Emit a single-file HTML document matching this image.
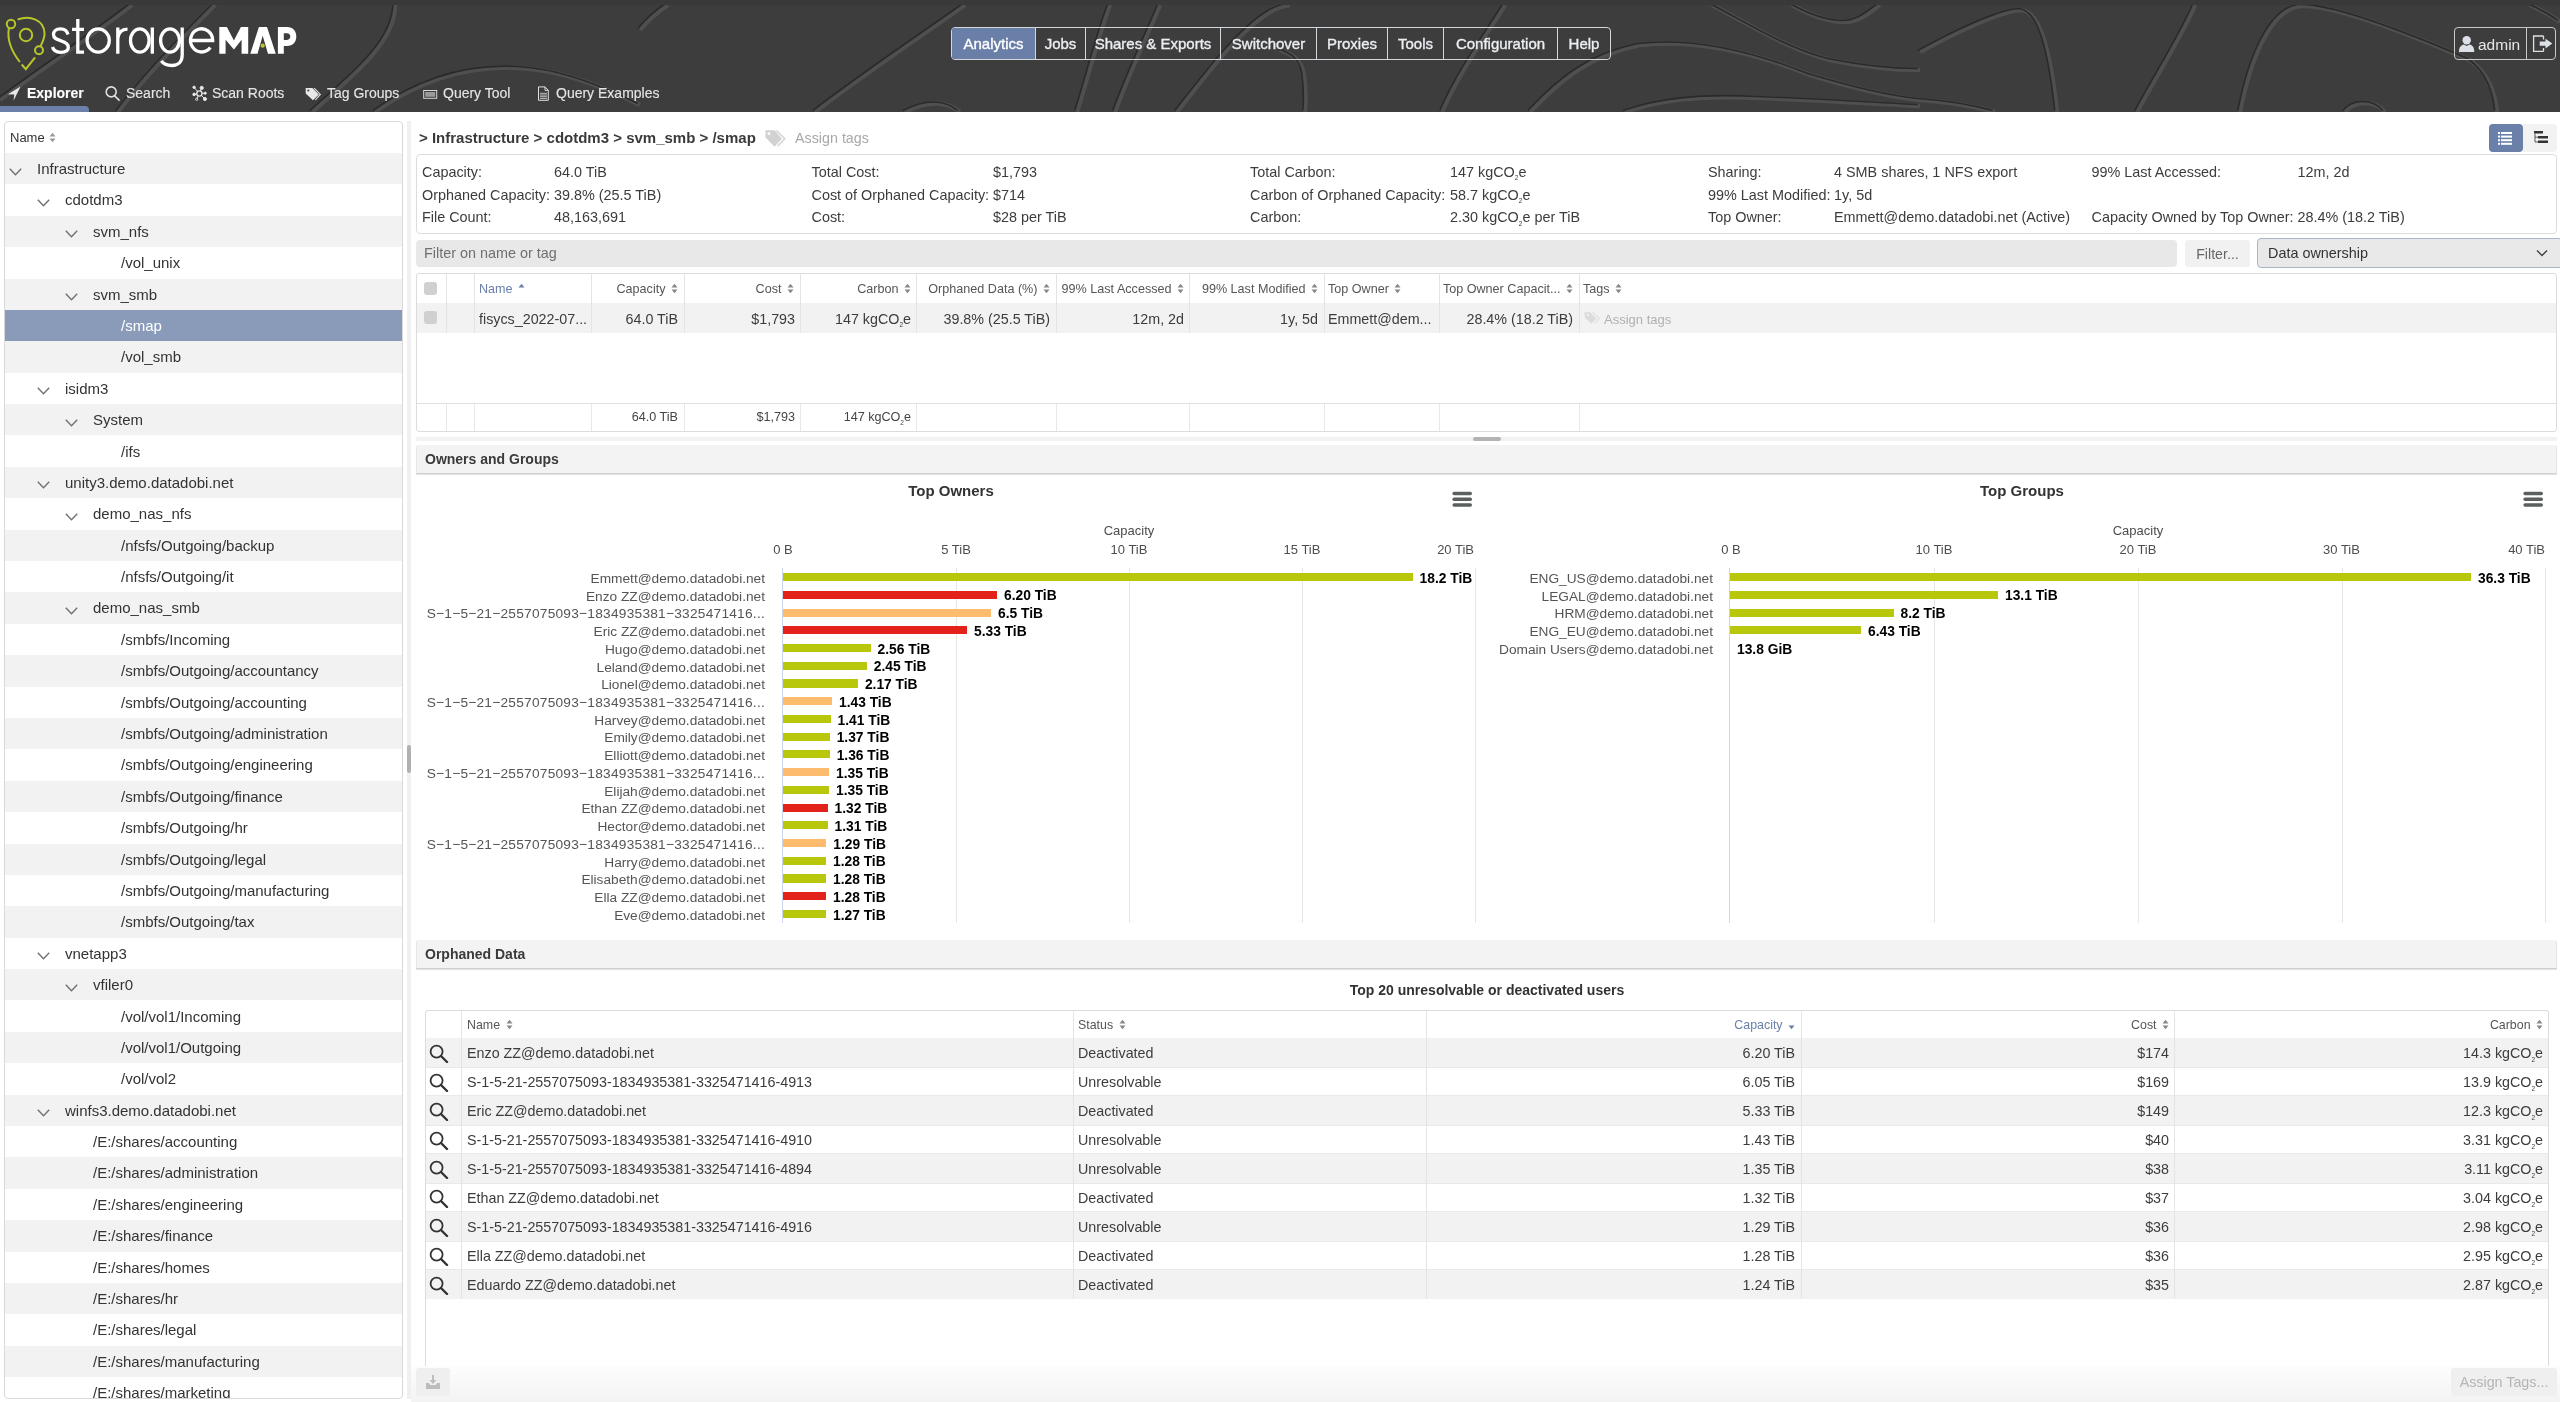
<!DOCTYPE html>
<html><head><meta charset="utf-8">
<style>
*{box-sizing:border-box;margin:0;padding:0}
html,body{width:2560px;height:1402px;overflow:hidden;background:#fff;font-family:"Liberation Sans",sans-serif;color:#333}
.a{position:absolute;white-space:nowrap}
#hdr{position:absolute;left:0;top:0;width:2560px;height:112px;background:#3d3d3d;overflow:hidden}
.topnav{position:absolute;left:951px;top:27px;height:33px;border:1px solid #d2d6dd;border-radius:4px;display:flex;overflow:hidden}
.topnav div{height:31px;line-height:31px;font-size:15px;color:#eceef2;border-left:1px solid #d2d6dd;text-align:center;-webkit-text-stroke:0.35px currentColor}
.topnav div:first-child{border-left:none;background:#6a7fa7;color:#fff}
.subnav{position:absolute;top:84px;font-size:14px;color:#e6e6e6;height:18px;line-height:18px;-webkit-text-stroke:0.12px currentColor}
/* tree */
#tree{position:absolute;left:4px;top:121px;width:399px;height:1278px;border:1px solid #d9d9d9;border-radius:4px;overflow:hidden;background:#fff}
#tree .th{position:absolute;left:0;top:0;width:100%;height:31px;font-size:13px;line-height:31px;padding-left:5px;color:#333}
.tr{position:absolute;left:0;width:397px;height:31.36px;font-size:15px;line-height:31px;color:#333}
.tr.g{background:#f2f2f2}
.tr.sel{background:#8a9bb9;color:#fff}
.tr svg{position:absolute;top:11px}
</style></head><body><div id="root" style="position:absolute;left:0;top:0;width:2560px;height:1402px;will-change:transform">
<div id="hdr">
  <svg width="2560" height="112" style="position:absolute;left:0;top:0" fill="none">
    <rect x="0" y="0" width="2560" height="5" fill="#393939"/>
    <g stroke="#4f4f4f" stroke-width="4.5"><path d="M 0 100 C 40 70, 100 30, 132 5 M 118 112 C 150 70, 190 30, 215 5 M 312 112 C 360 70, 395 40, 395 5 M 375 112 C 420 80, 470 65, 520 68 C 560 70, 600 85, 640 105 M 640 30 C 650 18, 660 10, 668 5 M 815 112 C 870 70, 930 30, 965 5 M 905 112 C 925 102, 945 100, 960 112 M 1077 112 C 1090 70, 1100 30, 1110 5 M 1115 112 C 1130 70, 1150 30, 1160 5 M 1177 112 C 1210 70, 1240 30, 1270 12 C 1275 9, 1282 6, 1290 5 M 1442 112 C 1460 70, 1490 30, 1505 5 M 1530 112 C 1560 80, 1590 55, 1640 45 C 1700 38, 1760 55, 1810 75 C 1860 90, 1900 98, 1920 100 C 1950 102, 1980 108, 1995 112 M 1625 112 C 1660 100, 1700 95, 1760 98 C 1820 100, 1880 104, 1920 106 M 1712 5 C 1750 25, 1790 50, 1830 60 C 1870 68, 1900 70, 1920 70 M 1792 5 C 1810 15, 1830 22, 1845 22 C 1860 22, 1870 12, 1880 5 M 1280 50 C 1295 55, 1302 62, 1304 75 C 1306 90, 1306 100, 1305 112 M 1920 52 C 1960 30, 2000 12, 2020 10 C 2040 10, 2050 50, 2057 112 M 2137 112 C 2160 70, 2185 30, 2195 5 M 2240 112 C 2250 60, 2270 10, 2300 6 C 2330 4, 2400 30, 2470 60 C 2490 75, 2495 95, 2497 112 M 2345 112 C 2355 100, 2375 100, 2385 112 M 2530 5 C 2545 12, 2555 18, 2560 22"/></g>
    <g stroke="#2a2a2a" stroke-width="1.6" transform="translate(-2.2,-1.5)"><path d="M 0 100 C 40 70, 100 30, 132 5 M 118 112 C 150 70, 190 30, 215 5 M 312 112 C 360 70, 395 40, 395 5 M 375 112 C 420 80, 470 65, 520 68 C 560 70, 600 85, 640 105 M 640 30 C 650 18, 660 10, 668 5 M 815 112 C 870 70, 930 30, 965 5 M 905 112 C 925 102, 945 100, 960 112 M 1077 112 C 1090 70, 1100 30, 1110 5 M 1115 112 C 1130 70, 1150 30, 1160 5 M 1177 112 C 1210 70, 1240 30, 1270 12 C 1275 9, 1282 6, 1290 5 M 1442 112 C 1460 70, 1490 30, 1505 5 M 1530 112 C 1560 80, 1590 55, 1640 45 C 1700 38, 1760 55, 1810 75 C 1860 90, 1900 98, 1920 100 C 1950 102, 1980 108, 1995 112 M 1625 112 C 1660 100, 1700 95, 1760 98 C 1820 100, 1880 104, 1920 106 M 1712 5 C 1750 25, 1790 50, 1830 60 C 1870 68, 1900 70, 1920 70 M 1792 5 C 1810 15, 1830 22, 1845 22 C 1860 22, 1870 12, 1880 5 M 1280 50 C 1295 55, 1302 62, 1304 75 C 1306 90, 1306 100, 1305 112 M 1920 52 C 1960 30, 2000 12, 2020 10 C 2040 10, 2050 50, 2057 112 M 2137 112 C 2160 70, 2185 30, 2195 5 M 2240 112 C 2250 60, 2270 10, 2300 6 C 2330 4, 2400 30, 2470 60 C 2490 75, 2495 95, 2497 112 M 2345 112 C 2355 100, 2375 100, 2385 112 M 2530 5 C 2545 12, 2555 18, 2560 22"/></g>
    <rect x="0" y="0" width="2560" height="5" fill="#393939"/>
  </svg>
  <!-- logo -->
  <svg class="a" style="left:0;top:10px" width="50" height="70" viewBox="0 10 50 70" fill="none" stroke="#b9c62a" stroke-width="2">
    <circle cx="11" cy="24" r="4.2"/>
    <circle cx="26" cy="35" r="6.2"/>
    <circle cx="39" cy="50.3" r="4"/>
    <path d="M17.6 19.5 C30 15 44 20 44.5 33 C45 38 42 43 40.5 46.3"/>
    <path d="M8.8 28.5 C7 40 12 52 19.9 62"/>
    <path d="M21.7 64.5 L25.8 69.2 L35.1 57.4"/>
  </svg>
  <svg class="a" style="left:0;top:0" width="300" height="75" viewBox="0 0 300 75" fill="none" stroke="#fff" stroke-width="3.3">
    <path d="M68 34.5 C67 30.5, 64 28.8, 60.5 28.8 C56 28.8, 53.5 31.5, 53.5 34.5 C53.5 38.5, 57 39.5, 61 40.8 C65 42, 68.3 43.5, 68.3 47.2 C68.3 50.8, 65 52.3, 60.5 52.3 C56.5 52.3, 53.5 50.5, 52.5 47"/>
    <path d="M77.8 19 V52.2 H84 M72 29.3 H84"/>
    <ellipse cx="98.2" cy="40.5" rx="11.1" ry="11.6"/>
    <path d="M117.8 53.7 V27.5 M117.8 38.5 C118.5 32, 122 29.2, 127.5 29.2"/>
    <ellipse cx="139.8" cy="40.5" rx="9.3" ry="11.7"/>
    <path d="M152.3 27.5 V53.7"/>
    <ellipse cx="170" cy="40.5" rx="9.4" ry="11.7"/>
    <path d="M182.2 27.5 V55 C182.2 62, 178 65.5, 172 65.5 C167 65.5, 163 63.5, 161.4 60.9"/>
    <path d="M190.5 40.5 H212.7 A11.1 11.6 0 1 0 210.3 47.6"/>
    <g stroke="none" fill="#fff">
      <path d="M219.3 53.8 L219.3 27 L226.9 27 L233.9 40.4 L240.9 27 L248.2 27 L248.2 53.8 L241.6 53.8 L241.6 39.7 L233.9 49.5 L225.6 39.7 L225.6 53.8 Z"/>
      <path d="M250.3 53.8 L258.9 27 L267 27 L275.8 53.8 L268 53.8 L262.7 35.8 L257.5 53.8 Z"/>
      <path fill-rule="evenodd" d="M277.9 53.8 V27 H287 C293 27 296.3 31 296.3 36.5 C296.3 42 293 46 287 46 H283.8 V53.8 Z M283.8 33.3 H287 C289.2 33.3 290.3 34.8 290.3 36.6 C290.3 38.5 289.2 39.9 287 39.9 H283.8 Z"/>
    </g>
    <circle cx="262.7" cy="45.7" r="2.1" fill="#b9c62a" stroke="none"/>
  </svg>
  <!-- sub nav -->
  <div style="position:absolute;left:0;top:106px;width:89px;height:6px;background:#6a80a8;border-radius:0 4px 0 0"></div>
  <svg class="a" style="left:0;top:80px" width="25" height="25" viewBox="0 80 25 25"><path d="M20.6 86.6 L8 94.2 L14.3 94.6 L13.5 100.8 Z" fill="#e8e8e8"/></svg>
  <div class="subnav" style="left:27px;font-weight:700;color:#fff;font-size:14px">Explorer</div>
  <svg class="a" style="left:100px;top:80px" width="25" height="25" viewBox="100 80 25 25" fill="none" stroke="#e0e0e0" stroke-width="1.6"><circle cx="111.2" cy="91.9" r="5"/><path d="M114.6 95.9 L119.6 100.6"/></svg>
  <div class="subnav" style="left:126px">Search</div>
  <svg class="a" style="left:185px;top:80px" width="25" height="25" viewBox="185 80 25 25" fill="#e6e6e6" stroke="#e6e6e6" stroke-width="1"><path d="M199.4 93.5 L194.1 87.3 M199.4 93.5 L201.7 87.9 M199.4 93.5 L205.2 93.2 M199.4 93.5 L194.1 94.4 M199.4 93.5 L196.7 99.3 M199.4 93.5 L204.9 99"/><circle cx="199.4" cy="93.5" r="2.6" fill="#3d3d3d" stroke-width="1.4"/><circle cx="194.1" cy="87.3" r="1.2"/><circle cx="201.7" cy="87.9" r="1.6"/><circle cx="205.2" cy="93.2" r="1.1"/><circle cx="194.1" cy="94.4" r="1.3"/><circle cx="196.7" cy="99.3" r="1.1" fill="#3d3d3d"/><circle cx="204.9" cy="99" r="1.6"/></svg>
  <div class="subnav" style="left:212px">Scan Roots</div>
  <svg class="a" style="left:300px;top:80px" width="25" height="25" viewBox="300 80 25 25"><path d="M305.7 88 L312.5 88 L318.8 94.4 L313 100.2 L305.7 93.6 Z" fill="#e8e8e8"/><circle cx="308.3" cy="90.5" r="1" fill="#3d3d3d"/><path d="M314.2 88.2 L320.3 94.4 L315.3 100" fill="none" stroke="#e8e8e8" stroke-width="1.1"/></svg>
  <div class="subnav" style="left:327px">Tag Groups</div>
  <svg class="a" style="left:420px;top:85px" width="20" height="18" viewBox="420 85 20 18"><rect x="423.7" y="90.5" width="13" height="7.8" fill="none" stroke="#d8d8d8" stroke-width="1"/><rect x="425.2" y="92" width="10" height="4.8" fill="#9a9a9a"/></svg>
  <div class="subnav" style="left:443px">Query Tool</div>
  <svg class="a" style="left:535px;top:84px" width="16" height="19" viewBox="535 84 16 19" fill="none" stroke="#e0e0e0" stroke-width="1"><path d="M538.5 86.9 H545 L548.3 90.3 V100.3 H538.5 Z M545 86.9 V90.3 H548.3"/><path d="M540 93.3 H547 M540 95 H547 M540 96.7 H547 M540 98.4 H547" stroke="#bdbdbd"/></svg>
  <div class="subnav" style="left:556px">Query Examples</div>
  <!-- top nav -->
  <div class="topnav">
    <div style="width:83px">Analytics</div>
    <div style="width:50px">Jobs</div>
    <div style="width:135px">Shares &amp; Exports</div>
    <div style="width:96px">Switchover</div>
    <div style="width:71px">Proxies</div>
    <div style="width:56px">Tools</div>
    <div style="width:114px">Configuration</div>
    <div style="width:53px">Help</div>
  </div>
  <div class="a" style="left:2454px;top:27px;width:102px;height:33px;border:1px solid #c8c8c8;border-radius:4px"></div>
  <div class="a" style="left:2526px;top:27px;width:1px;height:33px;background:#c8c8c8"></div>
  <svg class="a" style="left:2455px;top:32px" width="22" height="24" viewBox="2455 32 22 24" fill="#dde0e6"><circle cx="2466.7" cy="40.3" r="4.2"/><path d="M2459 52 C2459 46.5, 2461.5 45, 2464 44.5 L2466.7 46 L2469.4 44.5 C2472 45, 2474.3 46.5, 2474.3 52 Z"/></svg>
  <div class="a" style="left:2478px;top:36px;font-size:15.5px;line-height:18px;color:#e6e6e6">admin</div>
  <svg class="a" style="left:2528px;top:32px" width="28" height="24" viewBox="2528 32 28 24" fill="none" stroke="#dde0e6" stroke-width="1.3"><path d="M2543.5 36 H2533.6 V51.4 H2543.5 M2543.5 48 V51.4 M2543.5 36 V39.5"/><path d="M2539.7 41.5 H2545.5 V38.8 L2552.3 43.6 L2545.5 48.5 V45.8 H2539.7 Z" fill="#dde0e6" stroke="none"/></svg>
</div>

<!-- left tree -->
<div id="tree">
  <div class="th">Name <svg width="7" height="11" viewBox="0 0 7 11" style="vertical-align:-1px;margin-left:1px"><path d="M0.5 4.5 L3.5 0.8 L6.5 4.5Z M0.5 6.5 L3.5 10.2 L6.5 6.5Z" fill="#999"/></svg></div>
  <div class="tr g" style="top:31.00px"><svg style="left:3.5px;top:14.5px" width="13" height="8" viewBox="0 0 13 8" fill="none" stroke="#707070" stroke-width="1.4"><path d="M0.8 0.8 L6.5 6.8 L12.2 0.8"/></svg><span class="a" style="left:32px">Infrastructure</span></div>
<div class="tr" style="top:62.39px"><svg style="left:31.5px;top:14.5px" width="13" height="8" viewBox="0 0 13 8" fill="none" stroke="#707070" stroke-width="1.4"><path d="M0.8 0.8 L6.5 6.8 L12.2 0.8"/></svg><span class="a" style="left:60px">cdotdm3</span></div>
<div class="tr g" style="top:93.78px"><svg style="left:59.5px;top:14.5px" width="13" height="8" viewBox="0 0 13 8" fill="none" stroke="#707070" stroke-width="1.4"><path d="M0.8 0.8 L6.5 6.8 L12.2 0.8"/></svg><span class="a" style="left:88px">svm_nfs</span></div>
<div class="tr" style="top:125.17px"><span class="a" style="left:116px">/vol_unix</span></div>
<div class="tr g" style="top:156.56px"><svg style="left:59.5px;top:14.5px" width="13" height="8" viewBox="0 0 13 8" fill="none" stroke="#707070" stroke-width="1.4"><path d="M0.8 0.8 L6.5 6.8 L12.2 0.8"/></svg><span class="a" style="left:88px">svm_smb</span></div>
<div class="tr sel" style="top:187.95px"><span class="a" style="left:116px">/smap</span></div>
<div class="tr g" style="top:219.34px"><span class="a" style="left:116px">/vol_smb</span></div>
<div class="tr" style="top:250.73px"><svg style="left:31.5px;top:14.5px" width="13" height="8" viewBox="0 0 13 8" fill="none" stroke="#707070" stroke-width="1.4"><path d="M0.8 0.8 L6.5 6.8 L12.2 0.8"/></svg><span class="a" style="left:60px">isidm3</span></div>
<div class="tr g" style="top:282.12px"><svg style="left:59.5px;top:14.5px" width="13" height="8" viewBox="0 0 13 8" fill="none" stroke="#707070" stroke-width="1.4"><path d="M0.8 0.8 L6.5 6.8 L12.2 0.8"/></svg><span class="a" style="left:88px">System</span></div>
<div class="tr" style="top:313.51px"><span class="a" style="left:116px">/ifs</span></div>
<div class="tr g" style="top:344.90px"><svg style="left:31.5px;top:14.5px" width="13" height="8" viewBox="0 0 13 8" fill="none" stroke="#707070" stroke-width="1.4"><path d="M0.8 0.8 L6.5 6.8 L12.2 0.8"/></svg><span class="a" style="left:60px">unity3.demo.datadobi.net</span></div>
<div class="tr" style="top:376.29px"><svg style="left:59.5px;top:14.5px" width="13" height="8" viewBox="0 0 13 8" fill="none" stroke="#707070" stroke-width="1.4"><path d="M0.8 0.8 L6.5 6.8 L12.2 0.8"/></svg><span class="a" style="left:88px">demo_nas_nfs</span></div>
<div class="tr g" style="top:407.68px"><span class="a" style="left:116px">/nfsfs/Outgoing/backup</span></div>
<div class="tr" style="top:439.07px"><span class="a" style="left:116px">/nfsfs/Outgoing/it</span></div>
<div class="tr g" style="top:470.46px"><svg style="left:59.5px;top:14.5px" width="13" height="8" viewBox="0 0 13 8" fill="none" stroke="#707070" stroke-width="1.4"><path d="M0.8 0.8 L6.5 6.8 L12.2 0.8"/></svg><span class="a" style="left:88px">demo_nas_smb</span></div>
<div class="tr" style="top:501.85px"><span class="a" style="left:116px">/smbfs/Incoming</span></div>
<div class="tr g" style="top:533.24px"><span class="a" style="left:116px">/smbfs/Outgoing/accountancy</span></div>
<div class="tr" style="top:564.63px"><span class="a" style="left:116px">/smbfs/Outgoing/accounting</span></div>
<div class="tr g" style="top:596.02px"><span class="a" style="left:116px">/smbfs/Outgoing/administration</span></div>
<div class="tr" style="top:627.41px"><span class="a" style="left:116px">/smbfs/Outgoing/engineering</span></div>
<div class="tr g" style="top:658.80px"><span class="a" style="left:116px">/smbfs/Outgoing/finance</span></div>
<div class="tr" style="top:690.19px"><span class="a" style="left:116px">/smbfs/Outgoing/hr</span></div>
<div class="tr g" style="top:721.58px"><span class="a" style="left:116px">/smbfs/Outgoing/legal</span></div>
<div class="tr" style="top:752.97px"><span class="a" style="left:116px">/smbfs/Outgoing/manufacturing</span></div>
<div class="tr g" style="top:784.36px"><span class="a" style="left:116px">/smbfs/Outgoing/tax</span></div>
<div class="tr" style="top:815.75px"><svg style="left:31.5px;top:14.5px" width="13" height="8" viewBox="0 0 13 8" fill="none" stroke="#707070" stroke-width="1.4"><path d="M0.8 0.8 L6.5 6.8 L12.2 0.8"/></svg><span class="a" style="left:60px">vnetapp3</span></div>
<div class="tr g" style="top:847.14px"><svg style="left:59.5px;top:14.5px" width="13" height="8" viewBox="0 0 13 8" fill="none" stroke="#707070" stroke-width="1.4"><path d="M0.8 0.8 L6.5 6.8 L12.2 0.8"/></svg><span class="a" style="left:88px">vfiler0</span></div>
<div class="tr" style="top:878.53px"><span class="a" style="left:116px">/vol/vol1/Incoming</span></div>
<div class="tr g" style="top:909.92px"><span class="a" style="left:116px">/vol/vol1/Outgoing</span></div>
<div class="tr" style="top:941.31px"><span class="a" style="left:116px">/vol/vol2</span></div>
<div class="tr g" style="top:972.70px"><svg style="left:31.5px;top:14.5px" width="13" height="8" viewBox="0 0 13 8" fill="none" stroke="#707070" stroke-width="1.4"><path d="M0.8 0.8 L6.5 6.8 L12.2 0.8"/></svg><span class="a" style="left:60px">winfs3.demo.datadobi.net</span></div>
<div class="tr" style="top:1004.09px"><span class="a" style="left:88px">/E:/shares/accounting</span></div>
<div class="tr g" style="top:1035.48px"><span class="a" style="left:88px">/E:/shares/administration</span></div>
<div class="tr" style="top:1066.87px"><span class="a" style="left:88px">/E:/shares/engineering</span></div>
<div class="tr g" style="top:1098.26px"><span class="a" style="left:88px">/E:/shares/finance</span></div>
<div class="tr" style="top:1129.65px"><span class="a" style="left:88px">/E:/shares/homes</span></div>
<div class="tr g" style="top:1161.04px"><span class="a" style="left:88px">/E:/shares/hr</span></div>
<div class="tr" style="top:1192.43px"><span class="a" style="left:88px">/E:/shares/legal</span></div>
<div class="tr g" style="top:1223.82px"><span class="a" style="left:88px">/E:/shares/manufacturing</span></div>
<div class="tr" style="top:1255.21px"><span class="a" style="left:88px">/E:/shares/marketing</span></div>
</div>

<div class="a" style="left:407px;top:121px;width:4px;height:1278px;background:#f0f0f0"></div>
<div class="a" style="left:407px;top:745px;width:4px;height:28px;background:#b0b0b0;border-radius:2px"></div>
<div class="a" style="left:419.0px;top:130.3px;font-size:15px;line-height:15px;color:#3a3a3a;font-weight:700;">&gt; Infrastructure &gt; cdotdm3 &gt; svm_smb &gt; /smap</div>
<svg class="a" style="left:764px;top:129px" width="24" height="19" viewBox="764 129 24 19"><path d="M765.5 130.25 L774.6 130.25 L781.9 138.75 L774.6 146.65 L765.5 137.6 Z" fill="#d2d2d2"/><circle cx="769" cy="133.6" r="1.4" fill="#fff"/><path d="M776.4 130.5 L784.8 138.75 L777.6 146.3" fill="none" stroke="#d2d2d2" stroke-width="1.4"/></svg>
<div class="a" style="left:795.0px;top:130.9px;font-size:14.3px;line-height:14.3px;color:#a8a8a8;font-weight:400;">Assign tags</div>
<div class="a" style="left:2489px;top:124px;width:34px;height:28px;background:#6a80a8;border-radius:4px"></div>
<div class="a" style="left:2523px;top:124px;width:34px;height:28px;background:#f2f2f2;border-radius:0 4px 4px 0"></div>
<svg class="a" style="left:2498px;top:131px" width="16" height="14" viewBox="0 0 16 14" fill="#fff"><rect x="0" y="1" width="2" height="2"/><rect x="3" y="1" width="11" height="2"/><rect x="0" y="4.6" width="2" height="2"/><rect x="3" y="4.6" width="11" height="2"/><rect x="0" y="8.2" width="2" height="2"/><rect x="3" y="8.2" width="11" height="2"/><rect x="0" y="11.8" width="2" height="2"/><rect x="3" y="11.8" width="11" height="2"/></svg>
<svg class="a" style="left:2533px;top:130px" width="16" height="16" viewBox="0 0 16 16" fill="#333"><rect x="1" y="1" width="9" height="2.5"/><rect x="5" y="6" width="10" height="2.5"/><rect x="5" y="10.5" width="10" height="2.5"/><path d="M2 3.5 V12 H5 M2 7.2 H5" stroke="#333" stroke-width="0.8" fill="none"/></svg>
<div class="a" style="left:416px;top:154px;width:2141px;height:80px;border:1px solid #dcdcdc;border-radius:4px"></div>
<div class="a" style="left:422.0px;top:164.8px;font-size:14.4px;line-height:14.4px;color:#3c3c3c;font-weight:400;">Capacity:</div>
<div class="a" style="left:554.0px;top:164.8px;font-size:14.4px;line-height:14.4px;color:#3c3c3c;font-weight:400;">64.0 TiB</div>
<div class="a" style="left:422.0px;top:187.5px;font-size:14.4px;line-height:14.4px;color:#3c3c3c;font-weight:400;">Orphaned Capacity:</div>
<div class="a" style="left:554.0px;top:187.5px;font-size:14.4px;line-height:14.4px;color:#3c3c3c;font-weight:400;">39.8% (25.5 TiB)</div>
<div class="a" style="left:422.0px;top:210.2px;font-size:14.4px;line-height:14.4px;color:#3c3c3c;font-weight:400;">File Count:</div>
<div class="a" style="left:554.0px;top:210.2px;font-size:14.4px;line-height:14.4px;color:#3c3c3c;font-weight:400;">48,163,691</div>
<div class="a" style="left:811.5px;top:164.8px;font-size:14.4px;line-height:14.4px;color:#3c3c3c;font-weight:400;">Total Cost:</div>
<div class="a" style="left:993.0px;top:164.8px;font-size:14.4px;line-height:14.4px;color:#3c3c3c;font-weight:400;">$1,793</div>
<div class="a" style="left:811.5px;top:187.5px;font-size:14.4px;line-height:14.4px;color:#3c3c3c;font-weight:400;">Cost of Orphaned Capacity:</div>
<div class="a" style="left:993.0px;top:187.5px;font-size:14.4px;line-height:14.4px;color:#3c3c3c;font-weight:400;">$714</div>
<div class="a" style="left:811.5px;top:210.2px;font-size:14.4px;line-height:14.4px;color:#3c3c3c;font-weight:400;">Cost:</div>
<div class="a" style="left:993.0px;top:210.2px;font-size:14.4px;line-height:14.4px;color:#3c3c3c;font-weight:400;">$28 per TiB</div>
<div class="a" style="left:1250.0px;top:164.8px;font-size:14.4px;line-height:14.4px;color:#3c3c3c;font-weight:400;">Total Carbon:</div>
<div class="a" style="left:1450.0px;top:164.8px;font-size:14.4px;line-height:14.4px;color:#3c3c3c;font-weight:400;">147 kgCO<span style="font-size:6.5px;position:relative;top:3.5px">2</span>e</div>
<div class="a" style="left:1250.0px;top:187.5px;font-size:14.4px;line-height:14.4px;color:#3c3c3c;font-weight:400;">Carbon of Orphaned Capacity:</div>
<div class="a" style="left:1450.0px;top:187.5px;font-size:14.4px;line-height:14.4px;color:#3c3c3c;font-weight:400;">58.7 kgCO<span style="font-size:6.5px;position:relative;top:3.5px">2</span>e</div>
<div class="a" style="left:1250.0px;top:210.2px;font-size:14.4px;line-height:14.4px;color:#3c3c3c;font-weight:400;">Carbon:</div>
<div class="a" style="left:1450.0px;top:210.2px;font-size:14.4px;line-height:14.4px;color:#3c3c3c;font-weight:400;">2.30 kgCO<span style="font-size:6.5px;position:relative;top:3.5px">2</span>e per TiB</div>
<div class="a" style="left:1708.0px;top:164.8px;font-size:14.4px;line-height:14.4px;color:#3c3c3c;font-weight:400;">Sharing:</div>
<div class="a" style="left:1834.0px;top:164.8px;font-size:14.4px;line-height:14.4px;color:#3c3c3c;font-weight:400;">4 SMB shares, 1 NFS export</div>
<div class="a" style="left:1708.0px;top:187.5px;font-size:14.4px;line-height:14.4px;color:#3c3c3c;font-weight:400;">99% Last Modified:</div>
<div class="a" style="left:1834.0px;top:187.5px;font-size:14.4px;line-height:14.4px;color:#3c3c3c;font-weight:400;">1y, 5d</div>
<div class="a" style="left:1708.0px;top:210.2px;font-size:14.4px;line-height:14.4px;color:#3c3c3c;font-weight:400;">Top Owner:</div>
<div class="a" style="left:1834.0px;top:210.2px;font-size:14.4px;line-height:14.4px;color:#3c3c3c;font-weight:400;">Emmett@demo.datadobi.net (Active)</div>
<div class="a" style="left:2091.5px;top:164.8px;font-size:14.4px;line-height:14.4px;color:#3c3c3c;font-weight:400;">99% Last Accessed:</div>
<div class="a" style="left:2297.5px;top:164.8px;font-size:14.4px;line-height:14.4px;color:#3c3c3c;font-weight:400;">12m, 2d</div>
<div class="a" style="left:2091.5px;top:210.2px;font-size:14.4px;line-height:14.4px;color:#3c3c3c;font-weight:400;">Capacity Owned by Top Owner:</div>
<div class="a" style="left:2297.5px;top:210.2px;font-size:14.4px;line-height:14.4px;color:#3c3c3c;font-weight:400;">28.4% (18.2 TiB)</div>
<div class="a" style="left:416px;top:240px;width:1761px;height:27px;background:#e8e8e8;border-radius:4px"></div>
<div class="a" style="left:424.0px;top:246.3px;font-size:14.4px;line-height:14.4px;color:#6f6f6f;font-weight:400;">Filter on name or tag</div>
<div class="a" style="left:2185px;top:240px;width:65px;height:27px;background:#f1f1f1;border-radius:3px"></div>
<div class="a" style="left:2177.5px;width:80px;text-align:center;top:246.5px;font-size:14.2px;line-height:14.2px;color:#666;font-weight:400;">Filter...</div>
<div class="a" style="left:2257px;top:238px;width:306px;height:30px;background:#e9e9e9;border:1.5px solid #a9b5ca;border-radius:4px"></div>
<div class="a" style="left:2268.0px;top:246.3px;font-size:14.4px;line-height:14.4px;color:#333;font-weight:400;">Data ownership</div>
<svg class="a" style="left:2536px;top:249px" width="12" height="8" viewBox="0 0 12 8" fill="none" stroke="#444" stroke-width="1.5"><path d="M1 1.5 L6 6.5 L11 1.5"/></svg>
<div class="a" style="left:416px;top:273px;width:2141px;height:159px;border:1px solid #dcdcdc;border-radius:3px"></div>
<div class="a" style="left:417px;top:303px;width:2139px;height:30px;background:#f2f2f2"></div>
<div class="a" style="left:417px;top:403px;width:2139px;height:1px;background:#e0e0e0"></div>
<div class="a" style="left:445.5px;top:274px;width:1px;height:59px;background:#e4e4e4"></div>
<div class="a" style="left:445.5px;top:404px;width:1px;height:27px;background:#e8e8e8"></div>
<div class="a" style="left:473.5px;top:274px;width:1px;height:59px;background:#e4e4e4"></div>
<div class="a" style="left:473.5px;top:404px;width:1px;height:27px;background:#e8e8e8"></div>
<div class="a" style="left:590.5px;top:274px;width:1px;height:59px;background:#e4e4e4"></div>
<div class="a" style="left:590.5px;top:404px;width:1px;height:27px;background:#e8e8e8"></div>
<div class="a" style="left:683.5px;top:274px;width:1px;height:59px;background:#e4e4e4"></div>
<div class="a" style="left:683.5px;top:404px;width:1px;height:27px;background:#e8e8e8"></div>
<div class="a" style="left:800px;top:274px;width:1px;height:59px;background:#e4e4e4"></div>
<div class="a" style="left:800px;top:404px;width:1px;height:27px;background:#e8e8e8"></div>
<div class="a" style="left:916px;top:274px;width:1px;height:59px;background:#e4e4e4"></div>
<div class="a" style="left:916px;top:404px;width:1px;height:27px;background:#e8e8e8"></div>
<div class="a" style="left:1055.5px;top:274px;width:1px;height:59px;background:#e4e4e4"></div>
<div class="a" style="left:1055.5px;top:404px;width:1px;height:27px;background:#e8e8e8"></div>
<div class="a" style="left:1189px;top:274px;width:1px;height:59px;background:#e4e4e4"></div>
<div class="a" style="left:1189px;top:404px;width:1px;height:27px;background:#e8e8e8"></div>
<div class="a" style="left:1323.5px;top:274px;width:1px;height:59px;background:#e4e4e4"></div>
<div class="a" style="left:1323.5px;top:404px;width:1px;height:27px;background:#e8e8e8"></div>
<div class="a" style="left:1439px;top:274px;width:1px;height:59px;background:#e4e4e4"></div>
<div class="a" style="left:1439px;top:404px;width:1px;height:27px;background:#e8e8e8"></div>
<div class="a" style="left:1578.5px;top:274px;width:1px;height:59px;background:#e4e4e4"></div>
<div class="a" style="left:1578.5px;top:404px;width:1px;height:27px;background:#e8e8e8"></div>
<div class="a" style="left:424px;top:282px;width:13px;height:13px;background:#d0d0d0;border-radius:3px"></div>
<div class="a" style="left:424px;top:311px;width:13px;height:13px;background:#d0d0d0;border-radius:3px"></div>
<div class="a" style="left:479.0px;top:283.3px;font-size:12.6px;line-height:12.6px;color:#6a80a8;font-weight:400;">Name <svg width="7" height="11" viewBox="0 0 7 11" style="vertical-align:-1px;margin-left:2px"><path d="M0.5 4.5 L3.5 0.8 L6.5 4.5Z" fill="#6a80a8"/></svg></div>
<div class="a" style="left:-522.0px;width:1200px;text-align:right;top:283.3px;font-size:12.6px;line-height:12.6px;color:#555;font-weight:400;">Capacity <svg width="7" height="11" viewBox="0 0 7 11" style="vertical-align:-1px;margin-left:2px"><path d="M0.5 4.5 L3.5 0.8 L6.5 4.5Z M0.5 6.5 L3.5 10.2 L6.5 6.5Z" fill="#888"/></svg></div>
<div class="a" style="left:-406.0px;width:1200px;text-align:right;top:283.3px;font-size:12.6px;line-height:12.6px;color:#555;font-weight:400;">Cost <svg width="7" height="11" viewBox="0 0 7 11" style="vertical-align:-1px;margin-left:2px"><path d="M0.5 4.5 L3.5 0.8 L6.5 4.5Z M0.5 6.5 L3.5 10.2 L6.5 6.5Z" fill="#888"/></svg></div>
<div class="a" style="left:-289.0px;width:1200px;text-align:right;top:283.3px;font-size:12.6px;line-height:12.6px;color:#555;font-weight:400;">Carbon <svg width="7" height="11" viewBox="0 0 7 11" style="vertical-align:-1px;margin-left:2px"><path d="M0.5 4.5 L3.5 0.8 L6.5 4.5Z M0.5 6.5 L3.5 10.2 L6.5 6.5Z" fill="#888"/></svg></div>
<div class="a" style="left:-150.0px;width:1200px;text-align:right;top:283.3px;font-size:12.6px;line-height:12.6px;color:#555;font-weight:400;">Orphaned Data (%) <svg width="7" height="11" viewBox="0 0 7 11" style="vertical-align:-1px;margin-left:2px"><path d="M0.5 4.5 L3.5 0.8 L6.5 4.5Z M0.5 6.5 L3.5 10.2 L6.5 6.5Z" fill="#888"/></svg></div>
<div class="a" style="left:-16.0px;width:1200px;text-align:right;top:283.3px;font-size:12.6px;line-height:12.6px;color:#555;font-weight:400;">99% Last Accessed <svg width="7" height="11" viewBox="0 0 7 11" style="vertical-align:-1px;margin-left:2px"><path d="M0.5 4.5 L3.5 0.8 L6.5 4.5Z M0.5 6.5 L3.5 10.2 L6.5 6.5Z" fill="#888"/></svg></div>
<div class="a" style="left:118.0px;width:1200px;text-align:right;top:283.3px;font-size:12.6px;line-height:12.6px;color:#555;font-weight:400;">99% Last Modified <svg width="7" height="11" viewBox="0 0 7 11" style="vertical-align:-1px;margin-left:2px"><path d="M0.5 4.5 L3.5 0.8 L6.5 4.5Z M0.5 6.5 L3.5 10.2 L6.5 6.5Z" fill="#888"/></svg></div>
<div class="a" style="left:1328.0px;top:283.3px;font-size:12.6px;line-height:12.6px;color:#555;font-weight:400;">Top Owner <svg width="7" height="11" viewBox="0 0 7 11" style="vertical-align:-1px;margin-left:2px"><path d="M0.5 4.5 L3.5 0.8 L6.5 4.5Z M0.5 6.5 L3.5 10.2 L6.5 6.5Z" fill="#888"/></svg></div>
<div class="a" style="left:373.0px;width:1200px;text-align:right;top:283.3px;font-size:12.6px;line-height:12.6px;color:#555;font-weight:400;">Top Owner Capacit... <svg width="7" height="11" viewBox="0 0 7 11" style="vertical-align:-1px;margin-left:2px"><path d="M0.5 4.5 L3.5 0.8 L6.5 4.5Z M0.5 6.5 L3.5 10.2 L6.5 6.5Z" fill="#888"/></svg></div>
<div class="a" style="left:1583.0px;top:283.3px;font-size:12.6px;line-height:12.6px;color:#555;font-weight:400;">Tags <svg width="7" height="11" viewBox="0 0 7 11" style="vertical-align:-1px;margin-left:2px"><path d="M0.5 4.5 L3.5 0.8 L6.5 4.5Z M0.5 6.5 L3.5 10.2 L6.5 6.5Z" fill="#888"/></svg></div>
<div class="a" style="left:479.0px;top:311.7px;font-size:14.3px;line-height:14.3px;color:#3c3c3c;font-weight:400;">fisycs_2022-07...</div>
<div class="a" style="left:-522.0px;width:1200px;text-align:right;top:311.7px;font-size:14.3px;line-height:14.3px;color:#3c3c3c;font-weight:400;">64.0 TiB</div>
<div class="a" style="left:-405.0px;width:1200px;text-align:right;top:311.7px;font-size:14.3px;line-height:14.3px;color:#3c3c3c;font-weight:400;">$1,793</div>
<div class="a" style="left:-289.0px;width:1200px;text-align:right;top:311.7px;font-size:14.3px;line-height:14.3px;color:#3c3c3c;font-weight:400;">147 kgCO<span style="font-size:6.5px;position:relative;top:3.5px">2</span>e</div>
<div class="a" style="left:-150.0px;width:1200px;text-align:right;top:311.7px;font-size:14.3px;line-height:14.3px;color:#3c3c3c;font-weight:400;">39.8% (25.5 TiB)</div>
<div class="a" style="left:-16.0px;width:1200px;text-align:right;top:311.7px;font-size:14.3px;line-height:14.3px;color:#3c3c3c;font-weight:400;">12m, 2d</div>
<div class="a" style="left:118.0px;width:1200px;text-align:right;top:311.7px;font-size:14.3px;line-height:14.3px;color:#3c3c3c;font-weight:400;">1y, 5d</div>
<div class="a" style="left:373.0px;width:1200px;text-align:right;top:311.7px;font-size:14.3px;line-height:14.3px;color:#3c3c3c;font-weight:400;">28.4% (18.2 TiB)</div>
<div class="a" style="left:1328.0px;top:311.7px;font-size:14.3px;line-height:14.3px;color:#3c3c3c;font-weight:400;">Emmett@dem...</div>
<svg class="a" style="left:1584px;top:311px" width="18" height="15" viewBox="0 0 20 17"><path d="M0.5 1.5 L0.5 7 L8 14.5 L14 8.5 L6.5 1 Z" fill="#dcdcdc"/><circle cx="4" cy="4.5" r="1.3" fill="#f2f2f2"/><path d="M9 1 L10.5 1 L18 8.5 L12 14.5 L11.3 13.8 L16.5 8.5 Z" fill="#dcdcdc"/></svg>
<div class="a" style="left:1604.0px;top:312.8px;font-size:13px;line-height:13px;color:#b0b0b0;font-weight:400;">Assign tags</div>
<div class="a" style="left:-522.0px;width:1200px;text-align:right;top:411.3px;font-size:12.6px;line-height:12.6px;color:#444;font-weight:400;">64.0 TiB</div>
<div class="a" style="left:-405.0px;width:1200px;text-align:right;top:411.3px;font-size:12.6px;line-height:12.6px;color:#444;font-weight:400;">$1,793</div>
<div class="a" style="left:-289.0px;width:1200px;text-align:right;top:411.3px;font-size:12.6px;line-height:12.6px;color:#444;font-weight:400;">147 kgCO<span style="font-size:6.5px;position:relative;top:3.5px">2</span>e</div>
<div class="a" style="left:416px;top:437px;width:2141px;height:4px;background:#f2f2f2"></div>
<div class="a" style="left:1473px;top:437px;width:28px;height:4px;background:#b3b3b3;border-radius:2px"></div>
<div class="a" style="left:416px;top:445px;width:2141px;height:29px;background:#f3f3f3;border-left:1px solid #e6e6e6;border-right:1px solid #e6e6e6;border-bottom:1px solid #cfcfcf;box-shadow:0 1px 1px rgba(0,0,0,0.12);border-radius:3px 3px 0 0"></div><div class="a" style="left:425.0px;top:452.1px;font-size:14px;line-height:14px;color:#3a3a3a;font-weight:700;">Owners and Groups</div>
<div class="a" style="left:751.0px;width:400px;text-align:center;top:483.3px;font-size:15px;line-height:15px;color:#333;font-weight:700;">Top Owners</div>
<svg class="a" style="left:1452px;top:491px" width="20" height="17" viewBox="0 0 20 17" fill="#5b5f5f"><rect x="0.4" y="0.8" width="19.6" height="3.4" rx="1.7"/><rect x="0.4" y="6.5" width="19.6" height="3.4" rx="1.7"/><rect x="0.4" y="12.3" width="19.6" height="3.4" rx="1.7"/></svg>
<div class="a" style="left:1029.0px;width:200px;text-align:center;top:523.5px;font-size:13px;line-height:13px;color:#4d4d4d;font-weight:400;">Capacity</div>
<div class="a" style="left:683.0px;width:200px;text-align:center;top:542.5px;font-size:13px;line-height:13px;color:#4d4d4d;font-weight:400;">0 B</div>
<div class="a" style="left:856.0px;width:200px;text-align:center;top:542.5px;font-size:13px;line-height:13px;color:#4d4d4d;font-weight:400;">5 TiB</div>
<div class="a" style="left:1029.0px;width:200px;text-align:center;top:542.5px;font-size:13px;line-height:13px;color:#4d4d4d;font-weight:400;">10 TiB</div>
<div class="a" style="left:1202.0px;width:200px;text-align:center;top:542.5px;font-size:13px;line-height:13px;color:#4d4d4d;font-weight:400;">15 TiB</div>
<div class="a" style="left:1274.0px;width:200px;text-align:right;top:542.5px;font-size:13px;line-height:13px;color:#4d4d4d;font-weight:400;">20 TiB</div>
<div class="a" style="left:955.8px;top:568px;width:1px;height:355px;background:#e6e6e6"></div>
<div class="a" style="left:1129px;top:568px;width:1px;height:355px;background:#e6e6e6"></div>
<div class="a" style="left:1301.5px;top:568px;width:1px;height:355px;background:#e6e6e6"></div>
<div class="a" style="left:1475px;top:568px;width:1px;height:355px;background:#e6e6e6"></div>
<div class="a" style="left:782px;top:568px;width:1px;height:355px;background:#ccd6eb"></div>
<div class="a" style="left:783px;top:573.0px;width:629.6px;height:8.2px;background:#b8c70b"></div>
<div class="a" style="left:1419.6px;top:571.6px;font-size:13.8px;line-height:13.8px;color:#000;font-weight:700;">18.2 TiB</div>
<div class="a" style="left:365.0px;width:400px;text-align:right;top:571.8px;font-size:13.7px;line-height:13.7px;color:#555;font-weight:400;">Emmett@demo.datadobi.net</div>
<div class="a" style="left:783px;top:590.7px;width:214.0px;height:8.2px;background:#e3221b"></div>
<div class="a" style="left:1004.0px;top:589.3px;font-size:13.8px;line-height:13.8px;color:#000;font-weight:700;">6.20 TiB</div>
<div class="a" style="left:365.0px;width:400px;text-align:right;top:589.5px;font-size:13.7px;line-height:13.7px;color:#555;font-weight:400;">Enzo ZZ@demo.datadobi.net</div>
<div class="a" style="left:783px;top:608.5px;width:208.0px;height:8.2px;background:#fdbb6e"></div>
<div class="a" style="left:998.0px;top:607.1px;font-size:13.8px;line-height:13.8px;color:#000;font-weight:700;">6.5 TiB</div>
<div class="a" style="left:365.0px;width:400px;text-align:right;top:607.3px;font-size:13.7px;line-height:13.7px;color:#555;font-weight:400;letter-spacing:0.25px">S−1−5−21−2557075093−1834935381−3325471416...</div>
<div class="a" style="left:783px;top:626.2px;width:184.0px;height:8.2px;background:#e3221b"></div>
<div class="a" style="left:974.0px;top:624.8px;font-size:13.8px;line-height:13.8px;color:#000;font-weight:700;">5.33 TiB</div>
<div class="a" style="left:365.0px;width:400px;text-align:right;top:625.0px;font-size:13.7px;line-height:13.7px;color:#555;font-weight:400;">Eric ZZ@demo.datadobi.net</div>
<div class="a" style="left:783px;top:643.9px;width:87.6px;height:8.2px;background:#b8c70b"></div>
<div class="a" style="left:877.6px;top:642.5px;font-size:13.8px;line-height:13.8px;color:#000;font-weight:700;">2.56 TiB</div>
<div class="a" style="left:365.0px;width:400px;text-align:right;top:642.7px;font-size:13.7px;line-height:13.7px;color:#555;font-weight:400;">Hugo@demo.datadobi.net</div>
<div class="a" style="left:783px;top:661.6px;width:83.8px;height:8.2px;background:#b8c70b"></div>
<div class="a" style="left:873.8px;top:660.3px;font-size:13.8px;line-height:13.8px;color:#000;font-weight:700;">2.45 TiB</div>
<div class="a" style="left:365.0px;width:400px;text-align:right;top:660.5px;font-size:13.7px;line-height:13.7px;color:#555;font-weight:400;">Leland@demo.datadobi.net</div>
<div class="a" style="left:783px;top:679.4px;width:74.9px;height:8.2px;background:#b8c70b"></div>
<div class="a" style="left:864.9px;top:678.0px;font-size:13.8px;line-height:13.8px;color:#000;font-weight:700;">2.17 TiB</div>
<div class="a" style="left:365.0px;width:400px;text-align:right;top:678.2px;font-size:13.7px;line-height:13.7px;color:#555;font-weight:400;">Lionel@demo.datadobi.net</div>
<div class="a" style="left:783px;top:697.1px;width:49.0px;height:8.2px;background:#fdbb6e"></div>
<div class="a" style="left:839.0px;top:695.7px;font-size:13.8px;line-height:13.8px;color:#000;font-weight:700;">1.43 TiB</div>
<div class="a" style="left:365.0px;width:400px;text-align:right;top:695.9px;font-size:13.7px;line-height:13.7px;color:#555;font-weight:400;letter-spacing:0.25px">S−1−5−21−2557075093−1834935381−3325471416...</div>
<div class="a" style="left:783px;top:714.8px;width:47.6px;height:8.2px;background:#b8c70b"></div>
<div class="a" style="left:837.6px;top:713.5px;font-size:13.8px;line-height:13.8px;color:#000;font-weight:700;">1.41 TiB</div>
<div class="a" style="left:365.0px;width:400px;text-align:right;top:713.6px;font-size:13.7px;line-height:13.7px;color:#555;font-weight:400;">Harvey@demo.datadobi.net</div>
<div class="a" style="left:783px;top:732.6px;width:46.7px;height:8.2px;background:#b8c70b"></div>
<div class="a" style="left:836.7px;top:731.2px;font-size:13.8px;line-height:13.8px;color:#000;font-weight:700;">1.37 TiB</div>
<div class="a" style="left:365.0px;width:400px;text-align:right;top:731.4px;font-size:13.7px;line-height:13.7px;color:#555;font-weight:400;">Emily@demo.datadobi.net</div>
<div class="a" style="left:783px;top:750.3px;width:46.7px;height:8.2px;background:#b8c70b"></div>
<div class="a" style="left:836.7px;top:748.9px;font-size:13.8px;line-height:13.8px;color:#000;font-weight:700;">1.36 TiB</div>
<div class="a" style="left:365.0px;width:400px;text-align:right;top:749.1px;font-size:13.7px;line-height:13.7px;color:#555;font-weight:400;">Elliott@demo.datadobi.net</div>
<div class="a" style="left:783px;top:768.0px;width:46.0px;height:8.2px;background:#fdbb6e"></div>
<div class="a" style="left:836.0px;top:766.6px;font-size:13.8px;line-height:13.8px;color:#000;font-weight:700;">1.35 TiB</div>
<div class="a" style="left:365.0px;width:400px;text-align:right;top:766.8px;font-size:13.7px;line-height:13.7px;color:#555;font-weight:400;letter-spacing:0.25px">S−1−5−21−2557075093−1834935381−3325471416...</div>
<div class="a" style="left:783px;top:785.8px;width:46.0px;height:8.2px;background:#b8c70b"></div>
<div class="a" style="left:836.0px;top:784.4px;font-size:13.8px;line-height:13.8px;color:#000;font-weight:700;">1.35 TiB</div>
<div class="a" style="left:365.0px;width:400px;text-align:right;top:784.6px;font-size:13.7px;line-height:13.7px;color:#555;font-weight:400;">Elijah@demo.datadobi.net</div>
<div class="a" style="left:783px;top:803.5px;width:44.6px;height:8.2px;background:#e3221b"></div>
<div class="a" style="left:834.6px;top:802.1px;font-size:13.8px;line-height:13.8px;color:#000;font-weight:700;">1.32 TiB</div>
<div class="a" style="left:365.0px;width:400px;text-align:right;top:802.3px;font-size:13.7px;line-height:13.7px;color:#555;font-weight:400;">Ethan ZZ@demo.datadobi.net</div>
<div class="a" style="left:783px;top:821.2px;width:44.6px;height:8.2px;background:#b8c70b"></div>
<div class="a" style="left:834.6px;top:819.8px;font-size:13.8px;line-height:13.8px;color:#000;font-weight:700;">1.31 TiB</div>
<div class="a" style="left:365.0px;width:400px;text-align:right;top:820.0px;font-size:13.7px;line-height:13.7px;color:#555;font-weight:400;">Hector@demo.datadobi.net</div>
<div class="a" style="left:783px;top:839.0px;width:43.3px;height:8.2px;background:#fdbb6e"></div>
<div class="a" style="left:833.3px;top:837.6px;font-size:13.8px;line-height:13.8px;color:#000;font-weight:700;">1.29 TiB</div>
<div class="a" style="left:365.0px;width:400px;text-align:right;top:837.8px;font-size:13.7px;line-height:13.7px;color:#555;font-weight:400;letter-spacing:0.25px">S−1−5−21−2557075093−1834935381−3325471416...</div>
<div class="a" style="left:783px;top:856.7px;width:43.0px;height:8.2px;background:#b8c70b"></div>
<div class="a" style="left:833.0px;top:855.3px;font-size:13.8px;line-height:13.8px;color:#000;font-weight:700;">1.28 TiB</div>
<div class="a" style="left:365.0px;width:400px;text-align:right;top:855.5px;font-size:13.7px;line-height:13.7px;color:#555;font-weight:400;">Harry@demo.datadobi.net</div>
<div class="a" style="left:783px;top:874.4px;width:43.0px;height:8.2px;background:#b8c70b"></div>
<div class="a" style="left:833.0px;top:873.0px;font-size:13.8px;line-height:13.8px;color:#000;font-weight:700;">1.28 TiB</div>
<div class="a" style="left:365.0px;width:400px;text-align:right;top:873.2px;font-size:13.7px;line-height:13.7px;color:#555;font-weight:400;">Elisabeth@demo.datadobi.net</div>
<div class="a" style="left:783px;top:892.1px;width:43.0px;height:8.2px;background:#e3221b"></div>
<div class="a" style="left:833.0px;top:890.8px;font-size:13.8px;line-height:13.8px;color:#000;font-weight:700;">1.28 TiB</div>
<div class="a" style="left:365.0px;width:400px;text-align:right;top:890.9px;font-size:13.7px;line-height:13.7px;color:#555;font-weight:400;">Ella ZZ@demo.datadobi.net</div>
<div class="a" style="left:783px;top:909.9px;width:43.0px;height:8.2px;background:#b8c70b"></div>
<div class="a" style="left:833.0px;top:908.5px;font-size:13.8px;line-height:13.8px;color:#000;font-weight:700;">1.27 TiB</div>
<div class="a" style="left:365.0px;width:400px;text-align:right;top:908.7px;font-size:13.7px;line-height:13.7px;color:#555;font-weight:400;">Eve@demo.datadobi.net</div>
<div class="a" style="left:1822.0px;width:400px;text-align:center;top:483.3px;font-size:15px;line-height:15px;color:#333;font-weight:700;">Top Groups</div>
<svg class="a" style="left:2523px;top:491px" width="20" height="17" viewBox="0 0 20 17" fill="#5b5f5f"><rect x="0.4" y="0.8" width="19.6" height="3.4" rx="1.7"/><rect x="0.4" y="6.5" width="19.6" height="3.4" rx="1.7"/><rect x="0.4" y="12.3" width="19.6" height="3.4" rx="1.7"/></svg>
<div class="a" style="left:2038.0px;width:200px;text-align:center;top:523.5px;font-size:13px;line-height:13px;color:#4d4d4d;font-weight:400;">Capacity</div>
<div class="a" style="left:1631.0px;width:200px;text-align:center;top:542.5px;font-size:13px;line-height:13px;color:#4d4d4d;font-weight:400;">0 B</div>
<div class="a" style="left:1834.0px;width:200px;text-align:center;top:542.5px;font-size:13px;line-height:13px;color:#4d4d4d;font-weight:400;">10 TiB</div>
<div class="a" style="left:2038.0px;width:200px;text-align:center;top:542.5px;font-size:13px;line-height:13px;color:#4d4d4d;font-weight:400;">20 TiB</div>
<div class="a" style="left:2241.5px;width:200px;text-align:center;top:542.5px;font-size:13px;line-height:13px;color:#4d4d4d;font-weight:400;">30 TiB</div>
<div class="a" style="left:2345.0px;width:200px;text-align:right;top:542.5px;font-size:13px;line-height:13px;color:#4d4d4d;font-weight:400;">40 TiB</div>
<div class="a" style="left:1934px;top:568px;width:1px;height:355px;background:#e6e6e6"></div>
<div class="a" style="left:2138px;top:568px;width:1px;height:355px;background:#e6e6e6"></div>
<div class="a" style="left:2341.5px;top:568px;width:1px;height:355px;background:#e6e6e6"></div>
<div class="a" style="left:2545px;top:568px;width:1px;height:355px;background:#e6e6e6"></div>
<div class="a" style="left:1729px;top:568px;width:1px;height:355px;background:#ccd6eb"></div>
<div class="a" style="left:1730px;top:573.0px;width:741.0px;height:8.2px;background:#b8c70b"></div>
<div class="a" style="left:2478.0px;top:571.6px;font-size:13.8px;line-height:13.8px;color:#000;font-weight:700;">36.3 TiB</div>
<div class="a" style="left:1313.0px;width:400px;text-align:right;top:571.8px;font-size:13.7px;line-height:13.7px;color:#555;font-weight:400;">ENG_US@demo.datadobi.net</div>
<div class="a" style="left:1730px;top:590.7px;width:268.0px;height:8.2px;background:#b8c70b"></div>
<div class="a" style="left:2005.0px;top:589.3px;font-size:13.8px;line-height:13.8px;color:#000;font-weight:700;">13.1 TiB</div>
<div class="a" style="left:1313.0px;width:400px;text-align:right;top:589.5px;font-size:13.7px;line-height:13.7px;color:#555;font-weight:400;">LEGAL@demo.datadobi.net</div>
<div class="a" style="left:1730px;top:608.5px;width:163.5px;height:8.2px;background:#b8c70b"></div>
<div class="a" style="left:1900.5px;top:607.1px;font-size:13.8px;line-height:13.8px;color:#000;font-weight:700;">8.2 TiB</div>
<div class="a" style="left:1313.0px;width:400px;text-align:right;top:607.3px;font-size:13.7px;line-height:13.7px;color:#555;font-weight:400;">HRM@demo.datadobi.net</div>
<div class="a" style="left:1730px;top:626.2px;width:131.0px;height:8.2px;background:#b8c70b"></div>
<div class="a" style="left:1868.0px;top:624.8px;font-size:13.8px;line-height:13.8px;color:#000;font-weight:700;">6.43 TiB</div>
<div class="a" style="left:1313.0px;width:400px;text-align:right;top:625.0px;font-size:13.7px;line-height:13.7px;color:#555;font-weight:400;">ENG_EU@demo.datadobi.net</div>
<div class="a" style="left:1737.0px;top:642.5px;font-size:13.8px;line-height:13.8px;color:#000;font-weight:700;">13.8 GiB</div>
<div class="a" style="left:1313.0px;width:400px;text-align:right;top:642.7px;font-size:13.7px;line-height:13.7px;color:#555;font-weight:400;">Domain Users@demo.datadobi.net</div>
<div class="a" style="left:416px;top:940px;width:2141px;height:29px;background:#f3f3f3;border-left:1px solid #e6e6e6;border-right:1px solid #e6e6e6;border-bottom:1px solid #cfcfcf;box-shadow:0 1px 1px rgba(0,0,0,0.12);border-radius:3px 3px 0 0"></div><div class="a" style="left:425.0px;top:947.1px;font-size:14px;line-height:14px;color:#3a3a3a;font-weight:700;">Orphaned Data</div>
<div class="a" style="left:1187.0px;width:600px;text-align:center;top:982.6px;font-size:14px;line-height:14px;color:#333;font-weight:700;">Top 20 unresolvable or deactivated users</div>
<div class="a" style="left:425px;top:1010px;width:2124px;height:356px;border:1px solid #dcdcdc;border-bottom:none;border-radius:3px 3px 0 0"></div>
<div class="a" style="left:426px;top:1038.3px;width:2122px;height:29.0px;background:#f2f2f2"></div>
<div class="a" style="left:426px;top:1067.3px;width:2122px;height:1px;background:#e9e9e9"></div>
<div class="a" style="left:426px;top:1095.3px;width:2122px;height:1px;background:#e9e9e9"></div>
<div class="a" style="left:426px;top:1096.3px;width:2122px;height:29.0px;background:#f2f2f2"></div>
<div class="a" style="left:426px;top:1125.3px;width:2122px;height:1px;background:#e9e9e9"></div>
<div class="a" style="left:426px;top:1153.3px;width:2122px;height:1px;background:#e9e9e9"></div>
<div class="a" style="left:426px;top:1154.3px;width:2122px;height:29.0px;background:#f2f2f2"></div>
<div class="a" style="left:426px;top:1183.3px;width:2122px;height:1px;background:#e9e9e9"></div>
<div class="a" style="left:426px;top:1211.3px;width:2122px;height:1px;background:#e9e9e9"></div>
<div class="a" style="left:426px;top:1212.3px;width:2122px;height:29.0px;background:#f2f2f2"></div>
<div class="a" style="left:426px;top:1241.3px;width:2122px;height:1px;background:#e9e9e9"></div>
<div class="a" style="left:426px;top:1269.3px;width:2122px;height:1px;background:#e9e9e9"></div>
<div class="a" style="left:426px;top:1270.3px;width:2122px;height:29.0px;background:#f2f2f2"></div>
<div class="a" style="left:461px;top:1011px;width:1px;height:288.29999999999995px;background:#e4e4e4"></div>
<div class="a" style="left:1072.5px;top:1011px;width:1px;height:288.29999999999995px;background:#e4e4e4"></div>
<div class="a" style="left:1426px;top:1011px;width:1px;height:288.29999999999995px;background:#e4e4e4"></div>
<div class="a" style="left:1800.5px;top:1011px;width:1px;height:288.29999999999995px;background:#e4e4e4"></div>
<div class="a" style="left:2174px;top:1011px;width:1px;height:288.29999999999995px;background:#e4e4e4"></div>
<div class="a" style="left:467.0px;top:1018.5px;font-size:12.4px;line-height:12.4px;color:#555;font-weight:400;">Name <svg width="7" height="11" viewBox="0 0 7 11" style="vertical-align:-1px;margin-left:2px"><path d="M0.5 4.5 L3.5 0.8 L6.5 4.5Z M0.5 6.5 L3.5 10.2 L6.5 6.5Z" fill="#888"/></svg></div>
<div class="a" style="left:1078.0px;top:1018.5px;font-size:12.4px;line-height:12.4px;color:#555;font-weight:400;">Status <svg width="7" height="11" viewBox="0 0 7 11" style="vertical-align:-1px;margin-left:2px"><path d="M0.5 4.5 L3.5 0.8 L6.5 4.5Z M0.5 6.5 L3.5 10.2 L6.5 6.5Z" fill="#888"/></svg></div>
<div class="a" style="left:595.0px;width:1200px;text-align:right;top:1018.5px;font-size:12.4px;line-height:12.4px;color:#6a80a8;font-weight:400;">Capacity <svg width="7" height="11" viewBox="0 0 7 11" style="vertical-align:-1px;margin-left:2px"><path d="M0.5 6.5 L3.5 10.2 L6.5 6.5Z" fill="#6a80a8"/></svg></div>
<div class="a" style="left:969.0px;width:1200px;text-align:right;top:1018.5px;font-size:12.4px;line-height:12.4px;color:#555;font-weight:400;">Cost <svg width="7" height="11" viewBox="0 0 7 11" style="vertical-align:-1px;margin-left:2px"><path d="M0.5 4.5 L3.5 0.8 L6.5 4.5Z M0.5 6.5 L3.5 10.2 L6.5 6.5Z" fill="#888"/></svg></div>
<div class="a" style="left:1343.0px;width:1200px;text-align:right;top:1018.5px;font-size:12.4px;line-height:12.4px;color:#555;font-weight:400;">Carbon <svg width="7" height="11" viewBox="0 0 7 11" style="vertical-align:-1px;margin-left:2px"><path d="M0.5 4.5 L3.5 0.8 L6.5 4.5Z M0.5 6.5 L3.5 10.2 L6.5 6.5Z" fill="#888"/></svg></div>
<svg class="a" style="left:429px;top:1043.8px" width="20" height="19" viewBox="0 0 20 19" fill="none" stroke="#333" stroke-width="1.8"><circle cx="7.6" cy="7.6" r="6"/><path d="M12 12 L18 18" stroke-width="2.4" stroke-linecap="round"/></svg>
<div class="a" style="left:467.0px;top:1046.4px;font-size:14.3px;line-height:14.3px;color:#3c3c3c;font-weight:400;">Enzo ZZ@demo.datadobi.net</div>
<div class="a" style="left:1078.0px;top:1046.4px;font-size:14.3px;line-height:14.3px;color:#3c3c3c;font-weight:400;">Deactivated</div>
<div class="a" style="left:595.0px;width:1200px;text-align:right;top:1046.4px;font-size:14.3px;line-height:14.3px;color:#3c3c3c;font-weight:400;">6.20 TiB</div>
<div class="a" style="left:969.0px;width:1200px;text-align:right;top:1046.4px;font-size:14.3px;line-height:14.3px;color:#3c3c3c;font-weight:400;">$174</div>
<div class="a" style="left:1343.0px;width:1200px;text-align:right;top:1046.4px;font-size:14.3px;line-height:14.3px;color:#3c3c3c;font-weight:400;">14.3 kgCO<span style="font-size:6.5px;position:relative;top:3.5px">2</span>e</div>
<svg class="a" style="left:429px;top:1072.8px" width="20" height="19" viewBox="0 0 20 19" fill="none" stroke="#333" stroke-width="1.8"><circle cx="7.6" cy="7.6" r="6"/><path d="M12 12 L18 18" stroke-width="2.4" stroke-linecap="round"/></svg>
<div class="a" style="left:467.0px;top:1075.4px;font-size:14.3px;line-height:14.3px;color:#3c3c3c;font-weight:400;">S-1-5-21-2557075093-1834935381-3325471416-4913</div>
<div class="a" style="left:1078.0px;top:1075.4px;font-size:14.3px;line-height:14.3px;color:#3c3c3c;font-weight:400;">Unresolvable</div>
<div class="a" style="left:595.0px;width:1200px;text-align:right;top:1075.4px;font-size:14.3px;line-height:14.3px;color:#3c3c3c;font-weight:400;">6.05 TiB</div>
<div class="a" style="left:969.0px;width:1200px;text-align:right;top:1075.4px;font-size:14.3px;line-height:14.3px;color:#3c3c3c;font-weight:400;">$169</div>
<div class="a" style="left:1343.0px;width:1200px;text-align:right;top:1075.4px;font-size:14.3px;line-height:14.3px;color:#3c3c3c;font-weight:400;">13.9 kgCO<span style="font-size:6.5px;position:relative;top:3.5px">2</span>e</div>
<svg class="a" style="left:429px;top:1101.8px" width="20" height="19" viewBox="0 0 20 19" fill="none" stroke="#333" stroke-width="1.8"><circle cx="7.6" cy="7.6" r="6"/><path d="M12 12 L18 18" stroke-width="2.4" stroke-linecap="round"/></svg>
<div class="a" style="left:467.0px;top:1104.4px;font-size:14.3px;line-height:14.3px;color:#3c3c3c;font-weight:400;">Eric ZZ@demo.datadobi.net</div>
<div class="a" style="left:1078.0px;top:1104.4px;font-size:14.3px;line-height:14.3px;color:#3c3c3c;font-weight:400;">Deactivated</div>
<div class="a" style="left:595.0px;width:1200px;text-align:right;top:1104.4px;font-size:14.3px;line-height:14.3px;color:#3c3c3c;font-weight:400;">5.33 TiB</div>
<div class="a" style="left:969.0px;width:1200px;text-align:right;top:1104.4px;font-size:14.3px;line-height:14.3px;color:#3c3c3c;font-weight:400;">$149</div>
<div class="a" style="left:1343.0px;width:1200px;text-align:right;top:1104.4px;font-size:14.3px;line-height:14.3px;color:#3c3c3c;font-weight:400;">12.3 kgCO<span style="font-size:6.5px;position:relative;top:3.5px">2</span>e</div>
<svg class="a" style="left:429px;top:1130.8px" width="20" height="19" viewBox="0 0 20 19" fill="none" stroke="#333" stroke-width="1.8"><circle cx="7.6" cy="7.6" r="6"/><path d="M12 12 L18 18" stroke-width="2.4" stroke-linecap="round"/></svg>
<div class="a" style="left:467.0px;top:1133.4px;font-size:14.3px;line-height:14.3px;color:#3c3c3c;font-weight:400;">S-1-5-21-2557075093-1834935381-3325471416-4910</div>
<div class="a" style="left:1078.0px;top:1133.4px;font-size:14.3px;line-height:14.3px;color:#3c3c3c;font-weight:400;">Unresolvable</div>
<div class="a" style="left:595.0px;width:1200px;text-align:right;top:1133.4px;font-size:14.3px;line-height:14.3px;color:#3c3c3c;font-weight:400;">1.43 TiB</div>
<div class="a" style="left:969.0px;width:1200px;text-align:right;top:1133.4px;font-size:14.3px;line-height:14.3px;color:#3c3c3c;font-weight:400;">$40</div>
<div class="a" style="left:1343.0px;width:1200px;text-align:right;top:1133.4px;font-size:14.3px;line-height:14.3px;color:#3c3c3c;font-weight:400;">3.31 kgCO<span style="font-size:6.5px;position:relative;top:3.5px">2</span>e</div>
<svg class="a" style="left:429px;top:1159.8px" width="20" height="19" viewBox="0 0 20 19" fill="none" stroke="#333" stroke-width="1.8"><circle cx="7.6" cy="7.6" r="6"/><path d="M12 12 L18 18" stroke-width="2.4" stroke-linecap="round"/></svg>
<div class="a" style="left:467.0px;top:1162.4px;font-size:14.3px;line-height:14.3px;color:#3c3c3c;font-weight:400;">S-1-5-21-2557075093-1834935381-3325471416-4894</div>
<div class="a" style="left:1078.0px;top:1162.4px;font-size:14.3px;line-height:14.3px;color:#3c3c3c;font-weight:400;">Unresolvable</div>
<div class="a" style="left:595.0px;width:1200px;text-align:right;top:1162.4px;font-size:14.3px;line-height:14.3px;color:#3c3c3c;font-weight:400;">1.35 TiB</div>
<div class="a" style="left:969.0px;width:1200px;text-align:right;top:1162.4px;font-size:14.3px;line-height:14.3px;color:#3c3c3c;font-weight:400;">$38</div>
<div class="a" style="left:1343.0px;width:1200px;text-align:right;top:1162.4px;font-size:14.3px;line-height:14.3px;color:#3c3c3c;font-weight:400;">3.11 kgCO<span style="font-size:6.5px;position:relative;top:3.5px">2</span>e</div>
<svg class="a" style="left:429px;top:1188.8px" width="20" height="19" viewBox="0 0 20 19" fill="none" stroke="#333" stroke-width="1.8"><circle cx="7.6" cy="7.6" r="6"/><path d="M12 12 L18 18" stroke-width="2.4" stroke-linecap="round"/></svg>
<div class="a" style="left:467.0px;top:1191.4px;font-size:14.3px;line-height:14.3px;color:#3c3c3c;font-weight:400;">Ethan ZZ@demo.datadobi.net</div>
<div class="a" style="left:1078.0px;top:1191.4px;font-size:14.3px;line-height:14.3px;color:#3c3c3c;font-weight:400;">Deactivated</div>
<div class="a" style="left:595.0px;width:1200px;text-align:right;top:1191.4px;font-size:14.3px;line-height:14.3px;color:#3c3c3c;font-weight:400;">1.32 TiB</div>
<div class="a" style="left:969.0px;width:1200px;text-align:right;top:1191.4px;font-size:14.3px;line-height:14.3px;color:#3c3c3c;font-weight:400;">$37</div>
<div class="a" style="left:1343.0px;width:1200px;text-align:right;top:1191.4px;font-size:14.3px;line-height:14.3px;color:#3c3c3c;font-weight:400;">3.04 kgCO<span style="font-size:6.5px;position:relative;top:3.5px">2</span>e</div>
<svg class="a" style="left:429px;top:1217.8px" width="20" height="19" viewBox="0 0 20 19" fill="none" stroke="#333" stroke-width="1.8"><circle cx="7.6" cy="7.6" r="6"/><path d="M12 12 L18 18" stroke-width="2.4" stroke-linecap="round"/></svg>
<div class="a" style="left:467.0px;top:1220.4px;font-size:14.3px;line-height:14.3px;color:#3c3c3c;font-weight:400;">S-1-5-21-2557075093-1834935381-3325471416-4916</div>
<div class="a" style="left:1078.0px;top:1220.4px;font-size:14.3px;line-height:14.3px;color:#3c3c3c;font-weight:400;">Unresolvable</div>
<div class="a" style="left:595.0px;width:1200px;text-align:right;top:1220.4px;font-size:14.3px;line-height:14.3px;color:#3c3c3c;font-weight:400;">1.29 TiB</div>
<div class="a" style="left:969.0px;width:1200px;text-align:right;top:1220.4px;font-size:14.3px;line-height:14.3px;color:#3c3c3c;font-weight:400;">$36</div>
<div class="a" style="left:1343.0px;width:1200px;text-align:right;top:1220.4px;font-size:14.3px;line-height:14.3px;color:#3c3c3c;font-weight:400;">2.98 kgCO<span style="font-size:6.5px;position:relative;top:3.5px">2</span>e</div>
<svg class="a" style="left:429px;top:1246.8px" width="20" height="19" viewBox="0 0 20 19" fill="none" stroke="#333" stroke-width="1.8"><circle cx="7.6" cy="7.6" r="6"/><path d="M12 12 L18 18" stroke-width="2.4" stroke-linecap="round"/></svg>
<div class="a" style="left:467.0px;top:1249.4px;font-size:14.3px;line-height:14.3px;color:#3c3c3c;font-weight:400;">Ella ZZ@demo.datadobi.net</div>
<div class="a" style="left:1078.0px;top:1249.4px;font-size:14.3px;line-height:14.3px;color:#3c3c3c;font-weight:400;">Deactivated</div>
<div class="a" style="left:595.0px;width:1200px;text-align:right;top:1249.4px;font-size:14.3px;line-height:14.3px;color:#3c3c3c;font-weight:400;">1.28 TiB</div>
<div class="a" style="left:969.0px;width:1200px;text-align:right;top:1249.4px;font-size:14.3px;line-height:14.3px;color:#3c3c3c;font-weight:400;">$36</div>
<div class="a" style="left:1343.0px;width:1200px;text-align:right;top:1249.4px;font-size:14.3px;line-height:14.3px;color:#3c3c3c;font-weight:400;">2.95 kgCO<span style="font-size:6.5px;position:relative;top:3.5px">2</span>e</div>
<svg class="a" style="left:429px;top:1275.8px" width="20" height="19" viewBox="0 0 20 19" fill="none" stroke="#333" stroke-width="1.8"><circle cx="7.6" cy="7.6" r="6"/><path d="M12 12 L18 18" stroke-width="2.4" stroke-linecap="round"/></svg>
<div class="a" style="left:467.0px;top:1278.4px;font-size:14.3px;line-height:14.3px;color:#3c3c3c;font-weight:400;">Eduardo ZZ@demo.datadobi.net</div>
<div class="a" style="left:1078.0px;top:1278.4px;font-size:14.3px;line-height:14.3px;color:#3c3c3c;font-weight:400;">Deactivated</div>
<div class="a" style="left:595.0px;width:1200px;text-align:right;top:1278.4px;font-size:14.3px;line-height:14.3px;color:#3c3c3c;font-weight:400;">1.24 TiB</div>
<div class="a" style="left:969.0px;width:1200px;text-align:right;top:1278.4px;font-size:14.3px;line-height:14.3px;color:#3c3c3c;font-weight:400;">$35</div>
<div class="a" style="left:1343.0px;width:1200px;text-align:right;top:1278.4px;font-size:14.3px;line-height:14.3px;color:#3c3c3c;font-weight:400;">2.87 kgCO<span style="font-size:6.5px;position:relative;top:3.5px">2</span>e</div>
<div class="a" style="left:411px;top:1366px;width:2149px;height:36px;background:linear-gradient(#fdfdfd,#f3f3f3)"></div>
<div class="a" style="left:416px;top:1368px;width:34px;height:28px;background:#efefef;border-radius:3px"></div>
<svg class="a" style="left:426px;top:1375px" width="14" height="14" viewBox="0 0 14 14" fill="#bdbdbd"><rect x="6" y="0" width="2" height="6"/><path d="M3.5 5 H10.5 L7 9 Z"/><path d="M0 8 H3 L4 10 H10 L11 8 H14 V14 H0Z"/></svg>
<div class="a" style="left:2451px;top:1368px;width:106px;height:28px;background:#efefef;border-radius:3px"></div>
<div class="a" style="left:2444.0px;width:120px;text-align:center;top:1374.9px;font-size:14.3px;line-height:14.3px;color:#b5b5b5;font-weight:400;">Assign Tags...</div>
</div></body></html>
